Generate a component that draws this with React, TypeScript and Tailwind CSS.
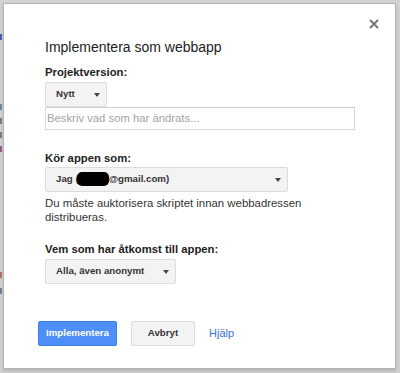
const Arrow = () => (
  <svg width="6" height="4" viewBox="0 0 6 4" className="shrink-0">
    <path d="M0 0 L6 0 L3 4 Z" fill="#444" />
  </svg>
);

const Select = ({ width, children }: { width: string; children: React.ReactNode }) => (
  <div
    className={`${width} h-[25px] flex items-center justify-between pl-[10px] pr-[6px] bg-[#f3f3f3] border border-[#dcdcdc] rounded-[2px] text-[9.7px] font-bold text-[#333]`}
  >
    <span className="whitespace-nowrap flex items-center">{children}</span>
    <Arrow />
  </div>
);

const App = () => {
  return (
    <div
      className="w-[400px] h-[373px] bg-[#d2d2d2] flex pt-[3px] overflow-hidden"
      style={{ fontFamily: '"Liberation Sans", Arial, sans-serif' }}
    >
      {/* edge of the page behind the dialog */}
      <div className="w-[3px] shrink-0 flex flex-col">
        <div className="h-[31px]" />
        <div className="h-[6px] w-[2px] bg-[#4a63a8]" />
        <div className="h-[64px]" />
        <div className="h-[6px] w-[2px] bg-[#6d8a9a]" />
        <div className="h-[8px]" />
        <div className="h-[6px] w-[2px] bg-[#8a7a6a]" />
        <div className="h-[8px]" />
        <div className="h-[6px] w-[2px] bg-[#8a7a6a]" />
        <div className="h-[8px]" />
        <div className="h-[6px] w-[2px] bg-[#9a5a8a]" />
        <div className="h-[120px]" />
        <div className="h-[6px] w-[2px] bg-[#b07070]" />
        <div className="h-[10px]" />
        <div className="h-[6px] w-[2px] bg-[#708090]" />
      </div>

      <div className="relative w-[393px] h-[366px] bg-white border border-[#b5b5b5] shadow-[0_2px_3px_rgba(0,0,0,0.15)] pt-[35px] pl-[41px] flex flex-col items-start">
        <button className="absolute top-[15px] right-[16px] w-[10px] h-[10px]">
          <svg width="10" height="10" viewBox="0 0 10 10">
            <path d="M1 1 L9 9 M9 1 L1 9" stroke="#777" strokeWidth="2" />
          </svg>
        </button>

        <h2 className="text-[14px] leading-[16px] text-[#222]">Implementera som webbapp</h2>

        <div className="mt-[10px] text-[11.3px] leading-[14px] font-bold text-[#222]">
          Projektversion:
        </div>
        <div className="mt-[3px]">
          <Select width="w-[62px]">Nytt</Select>
        </div>
        <div className="w-[310px] h-[23px] border border-[#d9d9d9] border-t-[#cfcfcf] flex items-center pl-[1px] text-[11.3px] text-[#a3a3a3]">
          Beskriv vad som har ändrats...
        </div>

        <div className="mt-[21px] text-[11.3px] leading-[14px] font-bold text-[#222]">
          Kör appen som:
        </div>
        <div className="mt-[2px]">
          <Select width="w-[243px]">
            Jag (
            <span className="inline-block w-[32px] h-[14px] -ml-[2px] bg-black rounded-[5px]" />
            @gmail.com)
          </Select>
        </div>
        <p className="mt-[4px] w-[270px] text-[11.4px] leading-[14px] text-[#333]">
          Du måste auktorisera skriptet innan webbadressen distribueras.
        </p>

        <div className="mt-[18px] text-[11.3px] leading-[14px] font-bold text-[#222]">
          Vem som har åtkomst till appen:
        </div>
        <div className="mt-[3px]">
          <Select width="w-[131px]">Alla, även anonymt</Select>
        </div>

        <div className="mt-[37px] -ml-[7px] flex items-center">
          <button className="w-[79px] h-[25px] bg-[#4d8ff7] border border-[#3f7fe8] rounded-[2px] text-white text-[9.7px] font-bold">
            Implementera
          </button>
          <button className="ml-[14px] w-[64px] h-[25px] bg-[#f3f3f3] border border-[#dcdcdc] rounded-[2px] text-[#333] text-[9.7px] font-bold">
            Avbryt
          </button>
          <a className="ml-[14px] text-[11px] text-[#3a6fd6]">Hjälp</a>
        </div>
      </div>
    </div>
  );
};

export default App;
